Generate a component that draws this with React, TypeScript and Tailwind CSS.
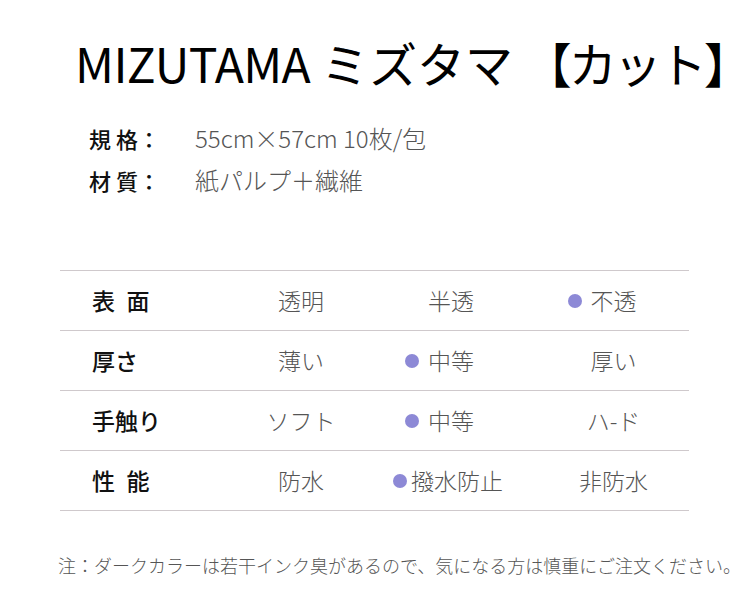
import React from "react";

const jp = { fontFamily: '"Noto Sans CJK JP", "Noto Sans", sans-serif' };

type Row = { label: string; values: string[]; pick: number; tight?: boolean };

const rows: Row[] = [
  { label: "表\u2002面", values: ["透明", "半透", "不透"], pick: 2 },
  { label: "厚さ", values: ["薄い", "中等", "厚い"], pick: 1 },
  { label: "手触り", values: ["ソフト", "中等", "ハ-ド"], pick: 1 },
  { label: "性\u2002能", values: ["防水", "撥水防止", "非防水"], pick: 1, tight: true },
];

const colW = ["w-[150px]", "w-[150px]", "w-[163px] pl-[12px]"];

export default function App() {
  return (
    <div className="w-[750px] h-[614px] bg-white overflow-hidden" style={jp}>
      <h1 className="pl-[75px] pt-[26px] text-[48px] leading-[72px] text-black font-normal whitespace-nowrap">
        <span className="tracking-[-0.6px]">MIZUTAMA</span> ミズタマ{" "}
        <span className="tracking-[-3px]">【カット】</span>
      </h1>

      <div className="mt-[24px] pl-[89px] flex flex-col gap-[10px]">
        <div className="flex items-center h-[32px]">
          <span className="w-[106px] text-[22px] font-medium text-[#111]">規&nbsp;格：</span>
          <span className="text-[24px] font-light text-[#555]">55cm×57cm 10枚/包</span>
        </div>
        <div className="flex items-center h-[32px]">
          <span className="w-[106px] text-[22px] font-medium text-[#111]">材&nbsp;質：</span>
          <span className="text-[24px] font-light text-[#555]">紙パルプ＋繊維</span>
        </div>
      </div>

      <div className="mt-[74px] mx-[60px] w-[629px] border-t border-[#cfc9cc]">
        {rows.map((r) => (
          <div key={r.label} className="flex items-center h-[60px] border-b border-[#cfc9cc]">
            <span className="pl-[32px] w-[166px] text-[23px] font-medium text-[#111]">{r.label}</span>
            {r.values.map((v, i) => (
              <span key={v + i} className={`${colW[i]} flex justify-center`}>
                <span
                  className={`relative text-[23px] font-light text-[#555] ${
                    i === r.pick && r.tight ? "ml-[12px]" : ""
                  }`}
                >
                  {i === r.pick && (
                    <span
                      className={`absolute top-1/2 -translate-y-1/2 w-[14px] h-[14px] rounded-full bg-[#8d89d6] ${
                        r.tight ? "left-[-18px]" : "left-[-23px]"
                      }`}
                    />
                  )}
                  {v}
                </span>
              </span>
            ))}
          </div>
        ))}
      </div>

      <p className="mt-[41px] pl-[58px] text-[18px] font-light text-[#555] whitespace-nowrap">
        注：ダークカラーは若干インク臭があるので、気になる方は慎重にご注文ください。
      </p>
    </div>
  );
}
